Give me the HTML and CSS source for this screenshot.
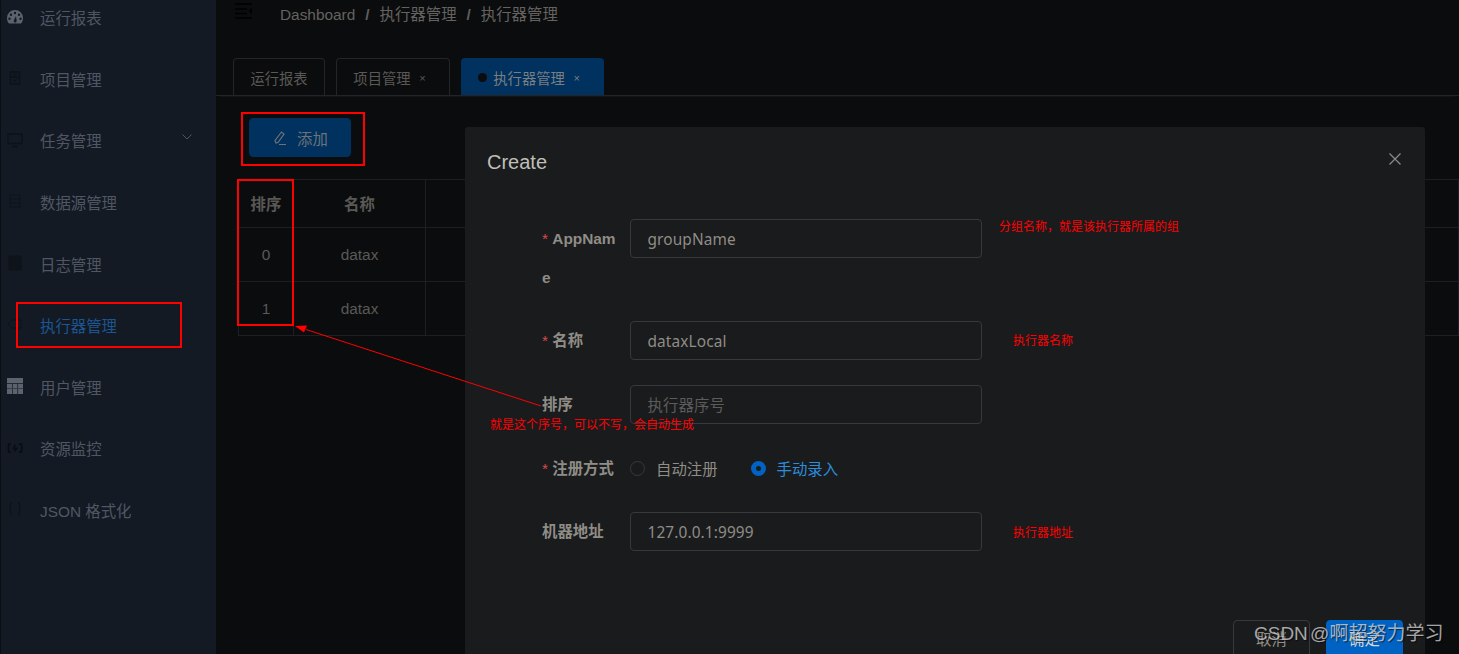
FILE: index.html
```html
<!DOCTYPE html>
<html lang="zh-CN">
<head>
<meta charset="utf-8">
<title>执行器管理</title>
<link rel="stylesheet" href="styles.css">
</head>
<body>
<div class="app">
  <aside class="sidebar">
    <ul class="menu">
      <li class="menu-item">
        <svg class="mi mi-light" viewBox="0 0 16 14"><path fill-rule="evenodd" d="M8 0a8 8 0 0 0-8 8c0 2.3.8 4.300 2 5.500h12c1.200-1.200 2-3.200 2-5.500a8 8 0 0 0-8-8zM4 3.500a1.200 1.200 0 1 1 0 2.400 1.200 1.200 0 0 1 0-2.400zM8 1.800a1.200 1.200 0 1 1 0 2.400 1.200 1.200 0 0 1 0-2.400zM12 3.500a1.200 1.200 0 1 1 0 2.400 1.200 1.200 0 0 1 0-2.400zM2.500 7.500a1.200 1.200 0 1 1 0 2.400 1.200 1.200 0 0 1 0-2.400zM13.500 7.500a1.200 1.200 0 1 1 0 2.400 1.200 1.200 0 0 1 0-2.400zM7 10l2-4 .6 4.500a1.500 1.500 0 1 1-2.600-.5z"/></svg>
        <span>运行报表</span>
      </li>
      <li class="menu-item">
        <svg class="mi mi-dark" viewBox="0 0 16 16"><path d="M3.500 2h9v12h-9zM3.500 7h9M6 9.500l2 1.500 2-1.500M6 4.500h4" fill="none" stroke="currentColor" stroke-width="1.400"/></svg>
        <span>项目管理</span>
      </li>
      <li class="menu-item">
        <svg class="mi mi-dark" viewBox="0 0 16 16"><path d="M1 2h14v9.500H1zM5 14.500h6" fill="none" stroke="currentColor" stroke-width="1.300"/></svg>
        <span>任务管理</span>
        <svg class="chev" viewBox="0 0 12 8"><path d="M1.500 1.500 6 6l4.500-4.500" fill="none" stroke="currentColor" stroke-width="1"/></svg>
      </li>
      <li class="menu-item">
        <svg class="mi mi-dark" viewBox="0 0 16 16"><path d="M3 2h10v12H3zM3 6h10M3 10h10" fill="none" stroke="currentColor" stroke-width="1"/></svg>
        <span>数据源管理</span>
      </li>
      <li class="menu-item">
        <svg class="mi mi-dark" viewBox="0 0 16 16"><path d="M2 1h12v14H2z" fill="#0f141b" stroke="currentColor" stroke-width="1"/><path d="M4 5h8M4 8h8M4 11h8" stroke="currentColor"/></svg>
        <span>日志管理</span>
      </li>
      <li class="menu-item active">
        <svg class="mi mi-dark" viewBox="0 0 16 16"><path d="M1 8l4-4h9v8H5z" fill="none" stroke="currentColor" stroke-width="1"/></svg>
        <span>执行器管理</span>
      </li>
      <li class="menu-item">
        <svg class="mi mi-light" viewBox="0 0 16 16"><path fill-rule="evenodd" d="M0 0h16v16H0zM0 5.200v.7h16v-.7zM0 10.400v.7h16v-.7zM5.200 5.900v10.100h.7V5.900zM10.400 5.900v10.100h.7V5.900z"/></svg>
        <span>用户管理</span>
      </li>
      <li class="menu-item">
        <svg class="mi mi-black" viewBox="0 0 16 16"><path d="M4 4H1.500v8H4M12 4h2.500v2.500L15.500 8l-1 1.500V12H12M8.500 4.500 6.500 8.500h3L7.500 11.500" fill="none" stroke="currentColor" stroke-width="1.500"/></svg>
        <span>资源监控</span>
      </li>
      <li class="menu-item">
        <svg class="mi mi-dark" viewBox="0 0 16 16"><path d="M5 2C3 2 3.500 4 3.500 6S3 8 2 8c1 0 1.500 0 1.500 2s-.5 4 1.500 4M11 2c2 0 1.500 2 1.500 4s.5 2 1.500 2c-1 0-1.500 0-1.500 2s.5 4-1.500 4" fill="none" stroke="currentColor" stroke-width="1.200"/></svg>
        <span>JSON 格式化</span>
      </li>
    </ul>
  </aside>

  <main class="main">
    <header class="topbar">
      <svg class="hamburger" viewBox="0 0 17 16"><path d="M0 1h17M0 6h12M0 10.500h12M0 15h17" stroke="currentColor" stroke-width="1.400"/><path d="M17 5v6l-3.500-3z" fill="currentColor"/></svg>
      <nav class="crumbs">
        <span>Dashboard</span><i>/</i><span>执行器管理</span><i>/</i><span>执行器管理</span>
      </nav>
    </header>
    <div class="tabs">
      <a class="tab">运行报表</a>
      <a class="tab">项目管理<b class="x">×</b></a>
      <a class="tab tab-on"><em class="dot"></em>执行器管理<b class="x">×</b></a>
    </div>
    <div class="content">
      <div class="toolbar">
        <button class="add-btn">
          <svg viewBox="0 0 16 16"><path d="M4 13 3 10.500 9.500 2l2.500 2-6 8.500zM7 14.500h7" fill="none" stroke="currentColor" stroke-width="1.200"/></svg>
          <span>添加</span>
        </button>
      </div>
      <table class="grid">
        <colgroup><col class="c1"><col class="c2"><col></colgroup>
        <thead><tr><th>排序</th><th>名称</th><th></th></tr></thead>
        <tbody>
          <tr><td>0</td><td>datax</td><td></td></tr>
          <tr><td>1</td><td>datax</td><td></td></tr>
        </tbody>
      </table>
    </div>
  </main>
</div>

<section class="dialog">
  <div class="dialog-head">
    <h2>Create</h2>
    <svg class="close" viewBox="0 0 12 12"><path d="M.5.500l11 11M11.500.500l-11 11" stroke="currentColor" stroke-width="1.200"/></svg>
  </div>
  <form class="form">
    <div class="row row-name">
      <label class="lbl req">AppName</label>
      <div class="field">groupName</div>
    </div>
    <div class="row row-title">
      <label class="lbl req">名称</label>
      <div class="field">dataxLocal</div>
    </div>
    <div class="row row-order">
      <label class="lbl">排序</label>
      <div class="field placeholder">执行器序号</div>
    </div>
    <div class="row row-radio">
      <label class="lbl req nowrap">注册方式</label>
      <div class="radios">
        <span class="radio"><i class="ring"></i>自动注册</span>
        <span class="radio on"><i class="ring"></i>手动录入</span>
      </div>
    </div>
    <div class="row row-addr">
      <label class="lbl">机器地址</label>
      <div class="field">127.0.0.1:9999</div>
    </div>
  </form>
  <div class="dialog-foot">
    <button class="btn">取消</button>
    <button class="btn btn-primary">确定</button>
  </div>
</section>

<div class="mark mark-side"></div>
<div class="mark mark-add"></div>
<div class="mark mark-col"></div>
<svg class="arrow" viewBox="0 0 1459 654">
  <path d="M541 406 306 329.500" stroke="#f00" stroke-width="1" fill="none"/>
  <path d="M295 326l12-.500-3 7z" fill="#f00"/>
</svg>
<p class="note note-group">分组名称，就是该执行器所属的组</p>
<p class="note note-name">执行器名称</p>
<p class="note note-order">就是这个序号，可以不写，会自动生成</p>
<p class="note note-addr">执行器地址</p>
<div class="watermark">CSDN @啊超努力学习</div>
</body>
</html>
```
FILE: styles.css
```css
* { box-sizing: border-box; }
html, body { margin: 0; height: 100%; overflow: hidden; }
body {
  position: relative;
  background: #0b0c0e;
  font-family: "Liberation Sans", "Noto Sans CJK SC", sans-serif;
  font-size: 15.4px;
  color: #6b6a66;
}
.app { display: flex; height: 654px; overflow: hidden; }

/* sidebar */
.sidebar {
  flex: 0 0 216px;
  background: #131a24;
  border-left: 1px solid #0b0e13;
  overflow: hidden;
}
.menu { list-style: none; margin: -13.5px 0 0; padding: 0; }
.menu-item {
  height: 61.6px;
  display: flex;
  align-items: center;
  position: relative;
  padding-left: 39px;
  color: #505763;
}
.menu-item.active { color: #1c5591; }
.mi { position: absolute; left: 6px; top: 22px; width: 16px; height: 16px; }
.mi-light { fill: #5d636e; }
.mi-dark { color: #0d1219; }
.mi-black { color: #0a0c10; }
.chev { position: absolute; left: 180px; top: 23px; width: 12px; height: 8px; color: #4d5561; }

/* main */
.main { flex: 1; min-width: 0; }
.topbar { height: 26px; display: flex; align-items: center; padding-left: 19px; }
.hamburger { width: 17px; height: 16px; color: #000; margin: -4px 0 0; }
.crumbs { margin-left: 28px; display: flex; align-items: baseline; color: #646360; font-size: 15.4px; }
.crumbs i { font-style: normal; font-weight: 700; margin: 0 10px; color: #605f5c; }

.tabs {
  margin-top: 32px;
  height: 38px;
  padding-left: 17px;
  display: flex;
  gap: 11px;
  border-bottom: 1px solid #232427;
  box-shadow: 0 5px 0 -4px #131416;
}
.tab {
  height: 37px;
  padding: 0 16.4px;
  display: flex;
  align-items: center;
  font-size: 14.3px;
  color: #5a5956;
  border: 1px solid #232528;
  border-bottom: 0;
  border-radius: 4px 4px 0 0;
}
.tab-on { background: #00315f; border-color: #00315f; color: #7a7f82; }
.dot { width: 9px; height: 9px; border-radius: 50%; background: #0b0c0e; margin-right: 6px; }
.x {
  width: 8px;
  margin: 2px 6px 0 8px;
  text-align: center;
  font-weight: 400;
  font-size: 11px;
  color: #5a5956;
}
.tab-on .x { color: #7a7f82; }

.content { padding: 22px 0 0 22px; }
.toolbar { height: 61px; padding-left: 11px; }
.add-btn {
  width: 102px;
  height: 39px;
  display: flex;
  align-items: center;
  justify-content: center;
  gap: 9px;
  padding: 0;
  border: 1px solid #00315f;
  border-radius: 4px;
  background: #00315f;
  color: #6c7378;
  font: inherit;
}
.add-btn svg { width: 16px; height: 16px; }

.grid { width: 100%; table-layout: fixed; border-collapse: collapse; color: #5a5956; }
.grid .c1 { width: 55px; }
.grid .c2 { width: 132px; }
.grid th, .grid td { border: 1px solid #1c1f24; text-align: center; padding: 0; }
.grid th { height: 48px; padding-bottom: 2px; font-weight: 700; color: #5a5855; }
.grid td { height: 54px; }

/* dialog */
.dialog {
  position: absolute;
  left: 465px;
  top: 127px;
  bottom: 0;
  width: 960px;
  overflow: hidden;
  background: #1a1b1d;
  border-radius: 3px 3px 0 0;
  color: #a8a69f;
}
.dialog-head { height: 71px; padding: 22px 0 0 22px; display: flex; justify-content: space-between; }
.dialog-head h2 { margin: 0; font-size: 20px; font-weight: 400; line-height: 26px; color: #c0bfb8; }
.close { width: 12px; height: 12px; margin: 4px 24px 0 0; color: #8b8b87; }

.form { padding: 21px 0 0 77px; }
.row { display: flex; }
.row-name { height: 102px; }
.row-title { height: 64px; }
.row-order { height: 64px; }
.row-radio { height: 63px; }
.lbl {
  flex: 0 0 88px;
  padding-right: 13px;
  line-height: 39px;
  font-weight: 700;
  color: #8f8d86;
  word-break: break-all;
}
.lbl.nowrap { white-space: nowrap; padding-right: 0; }
.req::before { content: "* "; color: #d94a4a; font-weight: 400; }
.field {
  width: 352px;
  height: 39px;
  padding: 0 16.500px;
  line-height: 39px;
  border: 1px solid #38393c;
  border-radius: 4px;
  font-family: "Noto Sans", "Noto Sans CJK SC", sans-serif;
  letter-spacing: .12px;
  color: #8f8d86;
}
.placeholder { color: #5c5c5b; }
.radios { display: flex; align-items: center; height: 38px; gap: 33px; }
.radio { display: flex; align-items: center; gap: 11px; color: #8f8d86; }
.ring {
  width: 15px;
  height: 15px;
  border-radius: 50%;
  border: 1px solid #38393c;
}
.radio.on { color: #2b8ddc; }
.radio.on .ring { border: 5px solid #0063c4; background: #1a1b1d; }

.dialog-foot {
  position: absolute;
  left: 768px;
  top: 493px;
  display: flex;
  gap: 16px;
}
.btn {
  width: 77px;
  height: 40px;
  padding: 0 0 5px;
  border: 1px solid #38393c;
  border-radius: 4px;
  background: transparent;
  color: #8f8d86;
  font: inherit;
}
.btn-primary { background: #0063c4; border-color: #0063c4; color: #d8d8d4; }

/* annotations */
.mark { position: absolute; border: 2px solid #f00; }
.mark-side { left: 16px; top: 302px; width: 166px; height: 46px; }
.mark-add { left: 241px; top: 112px; width: 124px; height: 54px; }
.mark-col { left: 237px; top: 179px; width: 57px; height: 147px; }
.arrow { position: absolute; left: 0; top: 0; width: 1459px; height: 654px; pointer-events: none; }
.note { position: absolute; margin: 0; font-size: 12px; line-height: 16px; color: #f00; white-space: nowrap; font-family: "Noto Sans CJK SC", sans-serif; }
.note-group { left: 999px; top: 218px; }
.note-name { left: 1013px; top: 332px; }
.note-order { left: 490px; top: 416px; }
.note-addr { left: 1013px; top: 524px; }
.watermark {
  position: absolute;
  left: 1254px;
  top: 621px;
  font-size: 19px;
  line-height: 26px;
  word-spacing: -3px;
  white-space: nowrap;
  color: rgba(225, 225, 225, .72);
  text-shadow: 1px 1px 1px rgba(0, 0, 0, .6);
}
```
